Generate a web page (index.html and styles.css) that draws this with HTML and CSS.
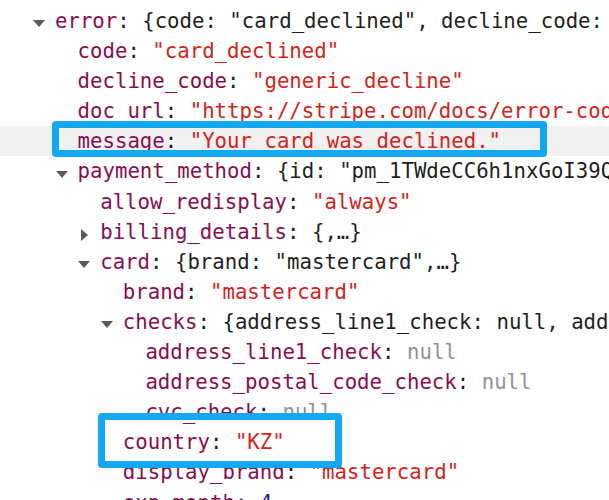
FILE: index.html
```html
<!DOCTYPE html>
<html>
<head>
<meta charset="utf-8">
<link rel="stylesheet" href="styles.css">
</head>
<body>
<div class="tree">
  <div class="row l0"><span class="tog down"></span><span class="key">error</span><span>: {code: "card_declined", decline_code: "generic_decline", doc_url: "https://stripe.com/docs/error-codes/card-declined",…}</span></div>
  <div class="row l1"><span class="tog"></span><span class="key">code</span><span>: </span><span class="str">"card_declined"</span></div>
  <div class="row l1"><span class="tog"></span><span class="key">decline_code</span><span>: </span><span class="str">"generic_decline"</span></div>
  <div class="row l1"><span class="tog"></span><span class="key">doc_url</span><span>: </span><span class="str">"https://stripe.com/docs/error-codes/card-declined"</span></div>
  <div class="row l1 hl"><span class="tog"></span><span class="key">message</span><span>: </span><span class="str">"Your card was declined."</span></div>
  <div class="row l1"><span class="tog down"></span><span class="key">payment_method</span><span>: {id: "pm_1TWdeCC6h1nxGoI39QkRt2aB", allow_redisplay: "always",…}</span></div>
  <div class="row l2"><span class="tog"></span><span class="key">allow_redisplay</span><span>: </span><span class="str">"always"</span></div>
  <div class="row l2"><span class="tog right"></span><span class="key">billing_details</span><span>: {,…}</span></div>
  <div class="row l2"><span class="tog down"></span><span class="key">card</span><span>: {brand: "mastercard",…}</span></div>
  <div class="row l3"><span class="tog"></span><span class="key">brand</span><span>: </span><span class="str">"mastercard"</span></div>
  <div class="row l3"><span class="tog down"></span><span class="key">checks</span><span>: {address_line1_check: null, address_postal_code_check: null, cvc_check: null}</span></div>
  <div class="row l4"><span class="tog"></span><span class="key">address_line1_check</span><span>: </span><span class="null">null</span></div>
  <div class="row l4"><span class="tog"></span><span class="key">address_postal_code_check</span><span>: </span><span class="null">null</span></div>
  <div class="row l4"><span class="tog"></span><span class="key">cvc_check</span><span>: </span><span class="null">null</span></div>
  <div class="row l3"><span class="tog"></span><span class="key">country</span><span>: </span><span class="str">"KZ"</span></div>
  <div class="row l3"><span class="tog"></span><span class="key">display_brand</span><span>: </span><span class="str">"mastercard"</span></div>
  <div class="row l3"><span class="tog"></span><span class="key">exp_month</span><span>: </span><span class="num">4</span></div>
</div>
<div class="mark mark-message"></div>
<div class="mark mark-country"></div>
</body>
</html>
```

FILE: styles.css
```css
html, body {
  margin: 0;
  padding: 0;
  background: #ffffff;
}

body {
  width: 609px;
  height: 500px;
  overflow: hidden;
  position: relative;
  font-family: "DejaVu Sans Mono", "Liberation Mono", monospace;
  font-size: 20.7px;
  color: #1f1f1f;
}

.tree {
  padding-top: 6px;
}

.row {
  display: flex;
  align-items: center;
  height: 30.1px;
  line-height: 30.1px;
  white-space: pre;
  overflow: hidden;
}

.l0 { padding-left: 32.4px; }
.l1 { padding-left: 55px; }
.l2 { padding-left: 77.6px; }
.l3 { padding-left: 100.2px; }
.l4 { padding-left: 122.8px; }

.hl {
  background: #f1f1f1;
}

.tog {
  flex: 0 0 22.6px;
  height: 100%;
  box-sizing: border-box;
  padding-top: 5.6px;
  display: flex;
  align-items: center;
}

.tog.down::before {
  content: "";
  margin-left: 0.6px;
  border-left: 6.2px solid transparent;
  border-right: 6.2px solid transparent;
  border-top: 7px solid #5b5b5b;
}

.tog.right::before {
  content: "";
  margin-left: 3.4px;
  border-top: 6px solid transparent;
  border-bottom: 6px solid transparent;
  border-left: 7px solid #5b5b5b;
}

.key { color: #880e4f; }
.str { color: #d3241a; }
.null { color: #929292; }
.num { color: #1a1aa6; }

.mark {
  position: absolute;
  box-sizing: border-box;
  border: 7px solid #14a7f2;
  border-radius: 4px;
}

.mark-message {
  left: 51.5px;
  top: 120.5px;
  width: 495.5px;
  height: 36.5px;
}

.mark-country {
  left: 98px;
  top: 413px;
  width: 244px;
  height: 55px;
}
```
